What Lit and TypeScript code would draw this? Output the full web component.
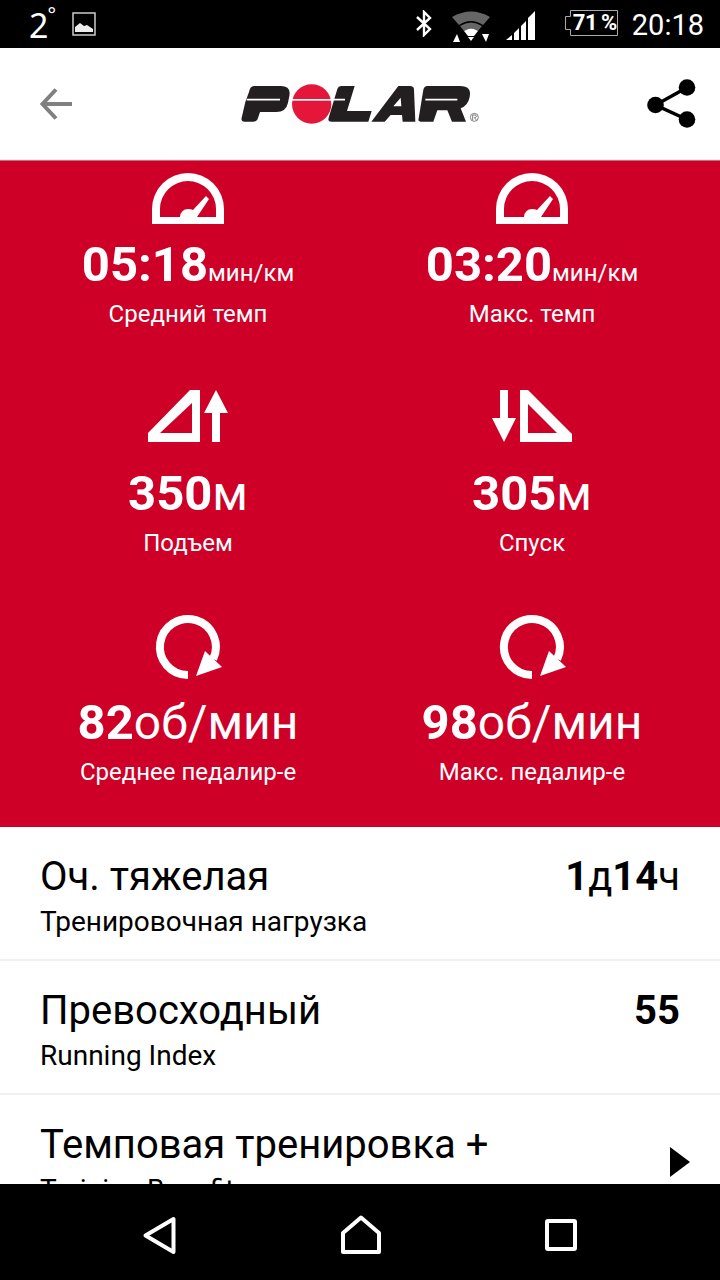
import { LitElement, html, css, svg } from "lit";
import { customElement } from "lit/decorators.js";

const speedo = () => svg`
  <path fill-rule="evenodd" d="M8 84V69A36 36 0 0 1 80 69V84ZM16 77H72V69A28 28 0 0 0 16 69Z"/>
  <path d="M36 77A8 8 0 0 1 44 69Q47 69 49 70L62 56L65 59L53 77Z"/>`;
const icons: Record<string, unknown> = {
  speed: speedo(),
  up: svg`<path fill-rule="evenodd" d="M46 21H56V73H4V64ZM16 64H48V34Z"/><path d="M72 21L84 44H76V73H68V44H60Z"/>`,
  down: svg`<path d="M12 21H20V49H28L16 73L4 49H12Z"/><path fill-rule="evenodd" d="M32 21H40L84 65V73H32ZM40 35V64H69Z"/>`,
  cycle: svg`<path d="M44 77A28 28 0 1 1 69.2 61" fill="none" stroke="#fff" stroke-width="8"/><path d="M61 53L78 69L52 78Z"/>`,
};

const stats = [
  { icon: "speed", value: "05:18", unit: "мин/км", small: true, label: "Средний темп" },
  { icon: "speed", value: "03:20", unit: "мин/км", small: true, label: "Макс. темп" },
  { icon: "up", value: "350", unit: "м", small: false, label: "Подъем" },
  { icon: "down", value: "305", unit: "м", small: false, label: "Спуск" },
  { icon: "cycle", value: "82", unit: "об/мин", small: false, label: "Среднее педалир-е" },
  { icon: "cycle", value: "98", unit: "об/мин", small: false, label: "Макс. педалир-е" },
];

@customElement("app-root")
export class AppRoot extends LitElement {
  static styles = css`
    :host { display: block; width: 720px; height: 1280px; overflow: hidden; background: #fff; font-family: Roboto, "Noto Sans", sans-serif; color: #000; }
    .app { height: 1280px; display: flex; flex-direction: column; }
    svg { display: block; }
    .status { height: 48px; flex: none; background: #000; color: #fff; display: flex; align-items: flex-start; box-sizing: border-box; }
    .temp { margin-left: 29px; width: 43px; font: 400 34px/50px "Noto Sans", sans-serif; display: flex; }
    .temp span { font-size: 20px; line-height: 30px; margin-left: -1px; }
    .pic { margin-top: 12px; }
    .sright { margin-left: auto; display: flex; align-items: flex-start; }
    .bt { margin: 10px 20px 0 0; }
    .wifi { margin: 10px 16px 0 0; }
    .signal { margin: 11px 30px 0 0; }
    .battery { position: relative; width: 53px; height: 26px; margin: 10px 14px 0 0; }
    .battery svg { position: absolute; inset: 0; }
    .battery span { position: absolute; left: 8px; top: 0; font: 700 22px/25px Roboto, sans-serif; letter-spacing: -0.5px; white-space: nowrap; word-spacing: -1px; }
    .clock { font: 400 29px/50px Roboto, sans-serif; margin-right: 16px; }
    .header { height: 112px; flex: none; box-sizing: border-box; border-bottom: 1px solid #f4f0f0; display: flex; align-items: flex-start; }
    .header .back { margin: 40px 0 0 40px; }
    .header .logo { margin: 27px 0 0 158px; }
    .header .share { margin: 31px 0 0 157px; }
    .red { height: 667px; flex: none; box-sizing: border-box; background: #ce0028; border-top: 1px solid #cf6a80; overflow: hidden; display: flex; flex-direction: column; justify-content: flex-end; color: #fff; }
    .grid { display: grid; grid-template-columns: 344px 344px; grid-auto-rows: 229px; padding: 0 16px; flex: none; }
    .cell { display: flex; flex-direction: column; align-items: center; }
    .cell svg { fill: #fff; flex: none; }
    .val { height: 56px; line-height: 56px; font-size: 49px; font-weight: 700; white-space: nowrap; margin-top: 9px; }
    .val span { font-size: 48px; font-weight: 400; }
    .val span.sm { font-size: 24px; }
    .lbl { font-size: 24px; line-height: 30px; margin-top: 6px; white-space: nowrap; }
    .content { flex: 1; min-height: 0; overflow: hidden; }
    .row { height: 132px; box-sizing: content-box; border-bottom: 2px solid #f0f0f0; display: flex; align-items: flex-start; justify-content: space-between; padding: 0 40px; }
    .row .t { font-size: 40px; line-height: 44px; margin-top: 28px; white-space: nowrap; }
    .row .s { font-size: 28px; line-height: 32px; margin-top: 7px; white-space: nowrap; }
    .row .v { font-size: 40px; font-weight: 700; line-height: 44px; margin-top: 28px; white-space: nowrap; }
    .row .v span { font-size: 40px; font-weight: 400; }
    .row .chev { margin: 52px -10px 0 0; }
    .nav { height: 96px; flex: none; background: #000; display: grid; grid-template-columns: 201px 201px 201px; padding-left: 59px; }
    .nav div { display: flex; justify-content: center; padding-top: 28px; }
  `;

  logo() {
    return html`<svg class="logo" width="260" height="60" viewBox="0 0 780 180">
      <g fill="#231f20">
        <path d="M72 33H152Q184 33 178 63L174 83Q168 111 139 111H90L84 129Q81 140 69 140H44Q32 140 35 128L46 81L57 51Q60 33 72 33Z"/>
        <path d="M335 33H374L351 108H425L415 140H305Q292 140 296 128L322 42Q325 33 335 33Z"/>
        <path fill-rule="evenodd" d="M505 33H540Q552 33 552 44L556 140H518L516 120H482L464 140H424ZM512 68L490 94H514Z"/>
        <path d="M592 33H690Q726 33 719 66Q714 92 692 100L708 140H666L652 106H622L610 140H572Q563 140 566 130L580 44Q583 33 592 33Z"/>
      </g>
      <path d="M50 74H150M308 74H345M586 74H682" stroke="#fff" stroke-width="5" fill="none"/>
      <circle cx="245" cy="87" r="59" fill="#e4173a"/>
      <rect x="180" y="72" width="130" height="5" fill="#fff"/>
      <circle cx="733" cy="127" r="12" fill="none" stroke="#666" stroke-width="2.5"/>
      <path d="M728 135V120H735Q739 120 739 124Q739 128 733 128L739 135" fill="none" stroke="#666" stroke-width="2.5"/>
    </svg>`;
  }

  render() {
    return html`<div class="app">
      <div class="status">
        <div class="temp">2<span>°</span></div>
        <svg class="pic" width="24" height="24" viewBox="0 0 24 24">
          <rect x="1" y="1" width="22" height="22" fill="none" stroke="#ccc" stroke-width="1.5"/>
          <path d="M3 20V15L8 11L12 14L15 13L21 17V20Z" fill="#eee"/>
        </svg>
        <div class="sright">
          <svg class="bt" width="16" height="27" viewBox="0 0 16 27"><path d="M1 7L14 19L8 25V2L14 8L1 20" fill="none" stroke="#fff" stroke-width="2.4"/></svg>
          <svg class="wifi" width="38" height="32" viewBox="0 0 38 32">
            <path d="M0 7Q19 -4 38 7L31 15Q19 7 7 15Z" fill="#666"/>
            <path d="M8 16Q19 9 30 16L26 21Q19 16 12 21Z" fill="#666"/>
            <path d="M12 21Q19 16 26 21L22 26H16Z" fill="#fff"/>
            <path d="M16 27H22L19 31ZM1 32L5 24L8 32ZM30 24H37L34 32Z" fill="#fff"/>
          </svg>
          <svg class="signal" width="29" height="29" viewBox="0 0 29 29"><path d="M0 29L6 24V29ZM8 22L13 17V29H8ZM15 15L20 10V29H15ZM22 7L29 0V29H22Z" fill="#fff"/></svg>
          <div class="battery">
            <svg width="53" height="26" viewBox="0 0 53 26"><path d="M5.5 .5H52.5V25.5H5.5V19.5H.5V6.5H5.5Z" fill="none" stroke="#aaa"/></svg>
            <span>71 %</span>
          </div>
          <div class="clock">20:18</div>
        </div>
      </div>
      <div class="header">
        <svg class="back" width="32" height="32" viewBox="0 0 32 32"><path d="M32 16H3M16 1.5L2.5 16L16 30.5" fill="none" stroke="#808080" stroke-width="4"/></svg>
        ${this.logo()}
        <svg class="share" width="49" height="50" viewBox="0 0 49 50">
          <path d="M40 8.5L8.5 26L40 40.5" fill="none" stroke="#000" stroke-width="3.5"/>
          <circle cx="40" cy="8.5" r="8.3"/><circle cx="8.5" cy="26" r="8.3"/><circle cx="40" cy="40.5" r="8.3"/>
        </svg>
      </div>
      <div class="red"><div class="grid">
        ${stats.map((s) => html`<div class="cell">
          <svg width="88" height="88" viewBox="0 0 88 88">${icons[s.icon]}</svg>
          <div class="val">${s.value}<span class=${s.small ? "sm" : ""}>${s.unit}</span></div>
          <div class="lbl">${s.label}</div>
        </div>`)}
      </div></div>
      <div class="content">
        <div class="row"><div><div class="t">Оч. тяжелая</div><div class="s">Тренировочная нагрузка</div></div><div class="v">1<span>д</span>14<span>ч</span></div></div>
        <div class="row"><div><div class="t">Превосходный</div><div class="s">Running Index</div></div><div class="v">55</div></div>
        <div class="row"><div><div class="t">Темповая тренировка +</div><div class="s">Training Benefit</div></div>
          <svg class="chev" width="20" height="30" viewBox="0 0 20 30"><path d="M0 0L20 15L0 30Z"/></svg></div>
      </div>
      <div class="nav">
        <div><svg width="40" height="44" viewBox="0 0 40 44"><path d="M33.5 7V40L5.5 23.5Z" fill="none" stroke="#fff" stroke-width="4" stroke-linejoin="round"/></svg></div>
        <div><svg width="40" height="44" viewBox="0 0 40 44"><path d="M20 5.5L38 21V40H2V21Z" fill="none" stroke="#fff" stroke-width="4" stroke-linejoin="round"/></svg></div>
        <div><svg width="40" height="44" viewBox="0 0 40 44"><rect x="5" y="9" width="28" height="28" rx="1" fill="none" stroke="#fff" stroke-width="4"/></svg></div>
      </div>
    </div>`;
  }
}
